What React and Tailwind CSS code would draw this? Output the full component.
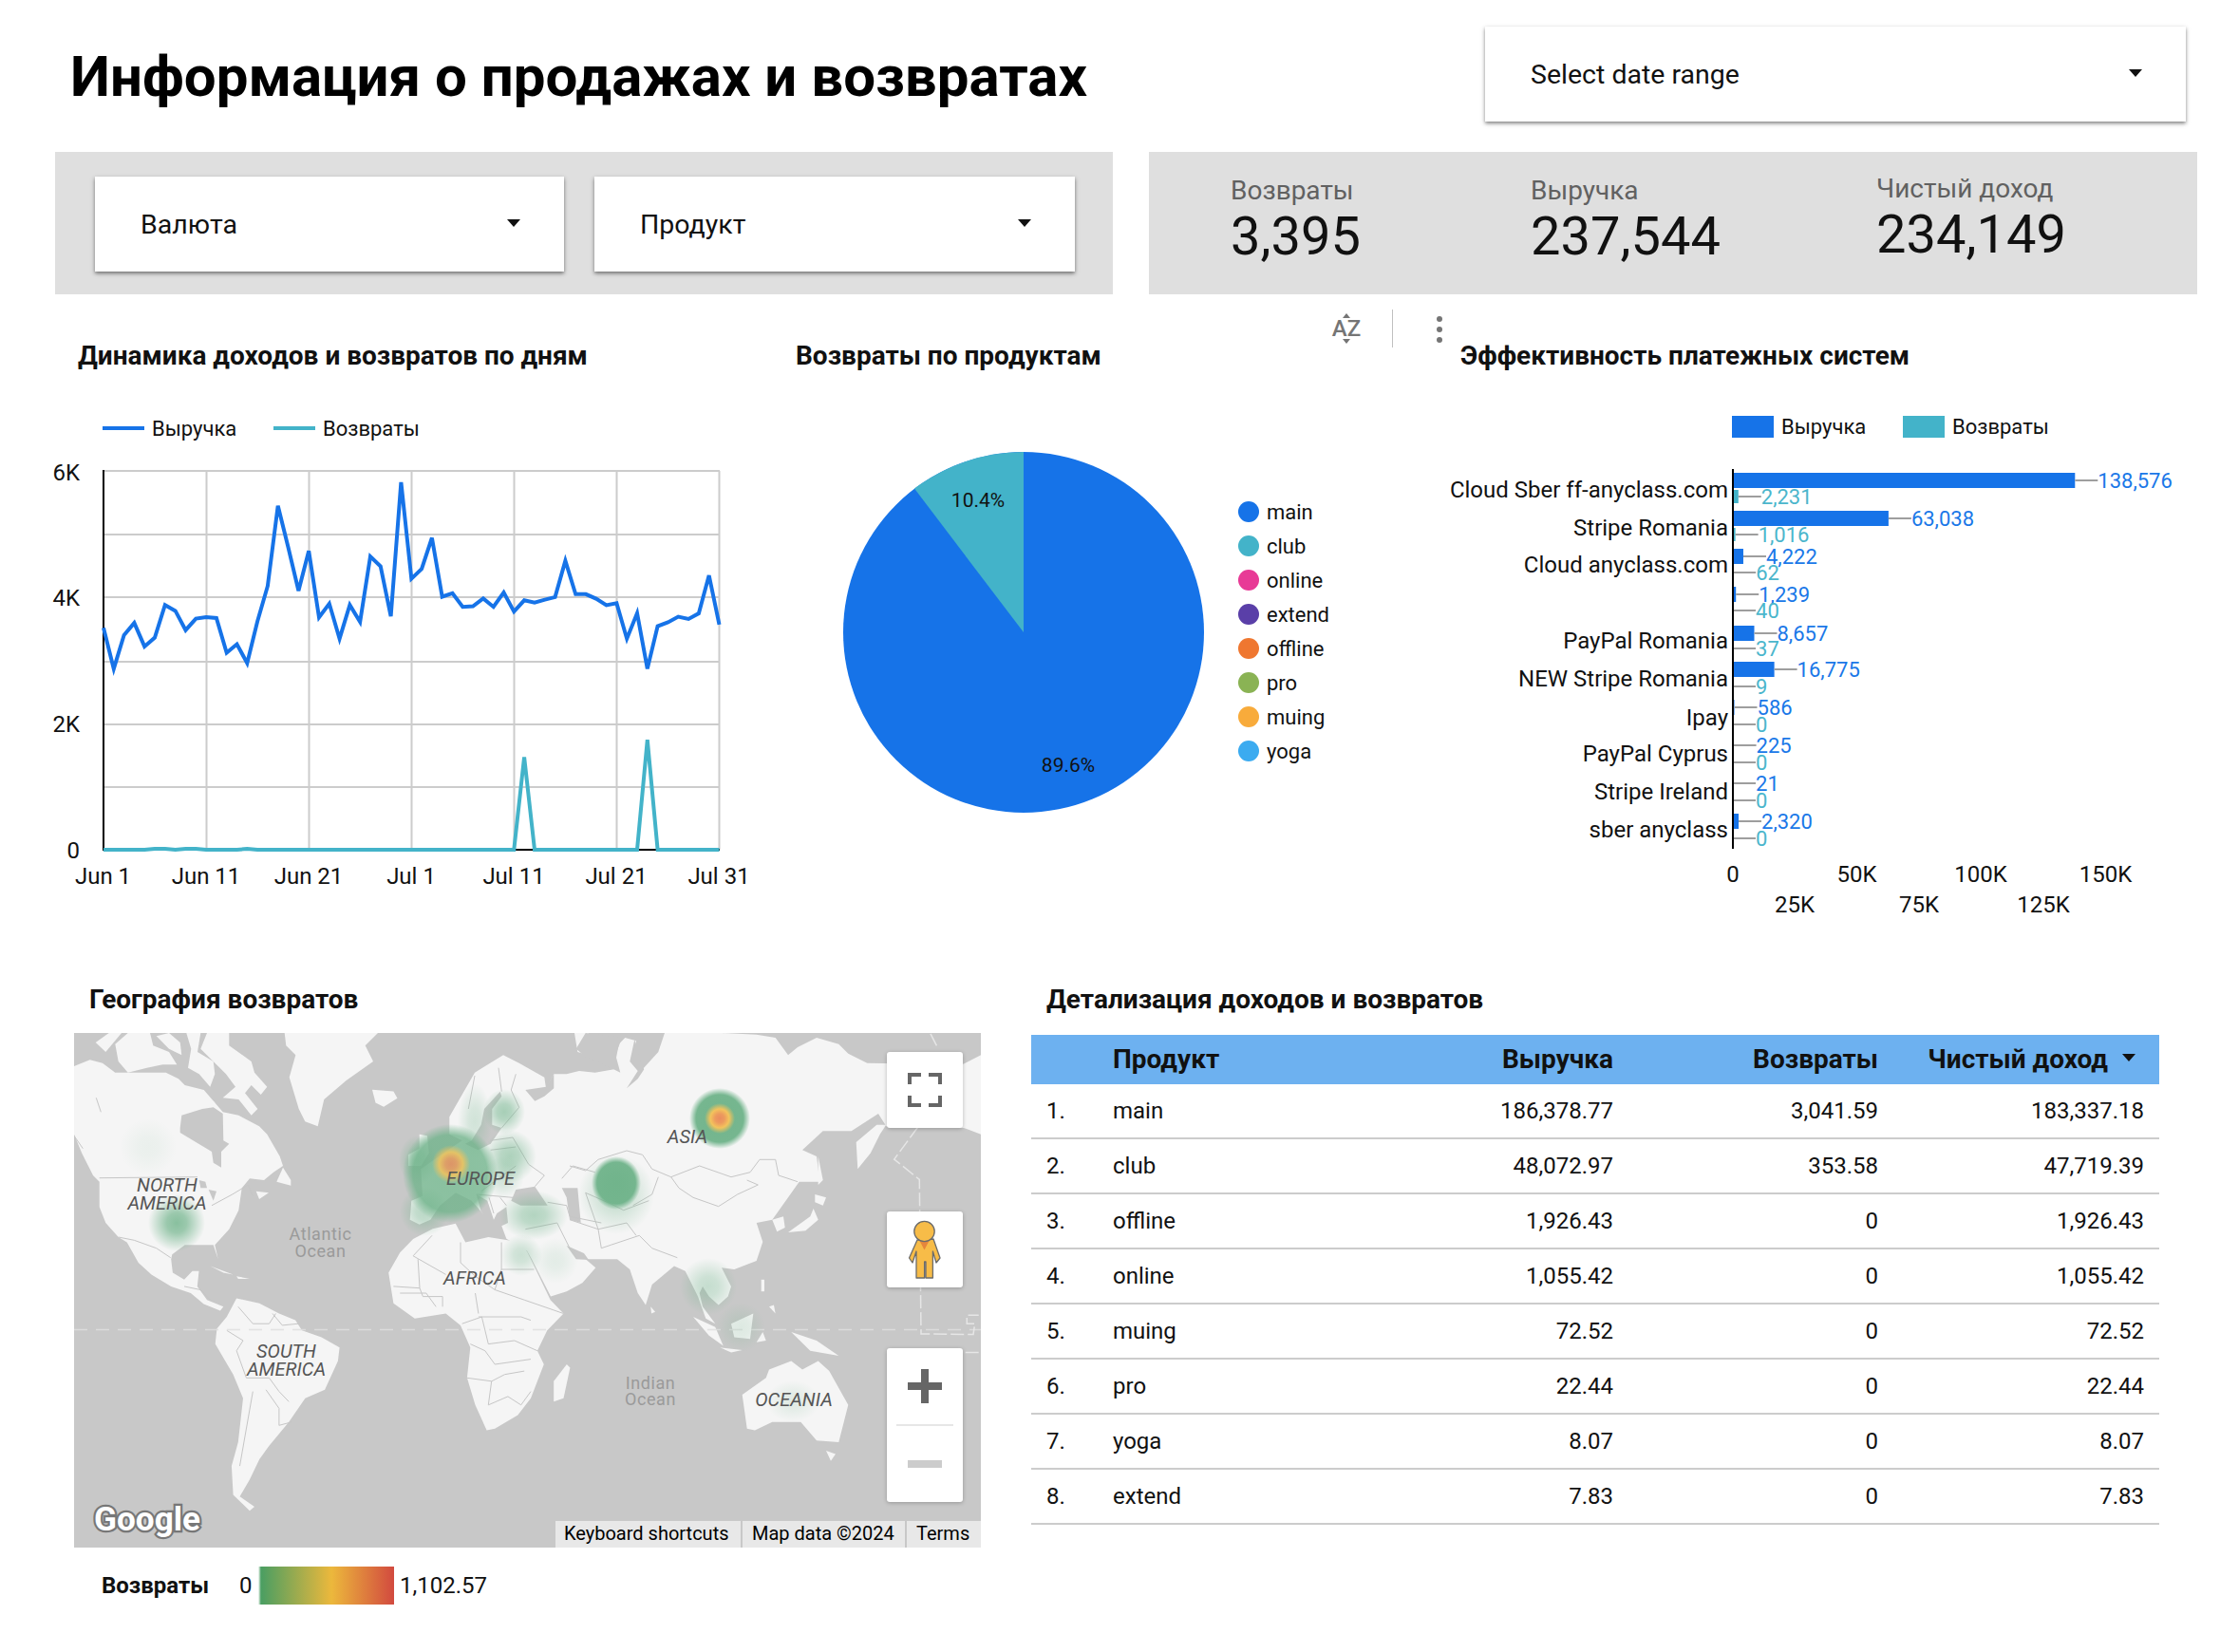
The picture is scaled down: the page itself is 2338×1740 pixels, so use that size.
import React from "react";

const BLUE = "#1673e8";
const TEAL = "#43b3c9";

/* ---------- line chart ---------- */
const rev = [700,825,722,685,757,730,630,648,707,672,667,670,776,750,808,680,572,327,455,587,465,668,626,733,630,682,482,512,665,255,550,520,425,605,594,636,634,610,636,592,650,616,623,614,606,495,597,597,611,631,625,733,655,825,695,683,666,673,656,540,690];
const ret = rev.map((_, i) => (i === 41 ? 1095 : i === 53 ? 1042 : i === 5 || i === 6 || i === 8 || i === 9 || i === 14 ? 1375 : 1378));
const lx = (i) => 109 + (648.5 / 60) * i;
const ly = (z) => 420 + z * 0.3447;
const linePts = (a) => a.map((z, i) => `${lx(i).toFixed(1)},${ly(z).toFixed(1)}`).join(" ");

function LineChart() {
  const hs = [496, 563, 629, 697, 763, 829, 895];
  const vs = [109, 217.5, 325.5, 433.5, 541.5, 649.5, 757.5];
  const xl = ["Jun 1", "Jun 11", "Jun 21", "Jul 1", "Jul 11", "Jul 21", "Jul 31"];
  return (
    <svg width="750" height="480" viewBox="50 470 750 480" className="block">
      {hs.map((y) => <line key={y} x1="109" x2="758" y1={y} y2={y} stroke="#cccccc" strokeWidth="2" />)}
      {vs.map((x) => <line key={x} x1={x} x2={x} y1="496" y2="895" stroke="#cccccc" strokeWidth="2" />)}
      <line x1="109" x2="758" y1="895" y2="895" stroke="#000" strokeWidth="2" />
      <line x1="109" x2="109" y1="495" y2="896" stroke="#000" strokeWidth="2" />
      <polyline points={linePts(rev)} fill="none" stroke={BLUE} strokeWidth="4" strokeLinejoin="miter" />
      <polyline points={linePts(ret)} fill="none" stroke={TEAL} strokeWidth="4" />
      {[["6K", 498], ["4K", 630], ["2K", 763], ["0", 896]].map(([t, y]) => (
        <text key={t} x="84" y={y} textAnchor="end" dominantBaseline="central" fontSize="24" fill="#111">{t}</text>
      ))}
      {xl.map((t, i) => (
        <text key={t} x={vs[i] - 0.5} y="923" textAnchor="middle" dominantBaseline="central" fontSize="24" fill="#111">{t}</text>
      ))}
    </svg>
  );
}

/* ---------- pie ---------- */
const pieLegend = [
  ["main", "bg-[#1673e8]"], ["club", "bg-[#43b3c9]"], ["online", "bg-[#e83a96]"], ["extend", "bg-[#5a3fa8]"],
  ["offline", "bg-[#ef7730]"], ["pro", "bg-[#8ab354]"], ["muing", "bg-[#f8ab3b]"], ["yoga", "bg-[#3babf0]"],
];

function Pie() {
  return (
    <div className="flex pl-[88px] mt-[81px]">
      <svg width="380" height="380" viewBox="0 0 380 380" className="block shrink-0">
        <circle cx="190" cy="190" r="190" fill={BLUE} />
        <path d="M190 190 L190 0 A190 190 0 0 0 75 38.6 Z" fill={TEAL} />
        <text x="142" y="51" textAnchor="middle" dominantBaseline="central" fontSize="21" fill="#111">10.4%</text>
        <text x="237" y="330" textAnchor="middle" dominantBaseline="central" fontSize="21" fill="#111">89.6%</text>
      </svg>
      <div className="ml-[36px] mt-[45px] flex flex-col">
        {pieLegend.map(([t, c]) => (
          <div key={t} className="h-[36px] flex items-center gap-[8px] text-[22px] text-[#111]">
            <span className={`w-[22px] h-[22px] rounded-full ${c}`} />
            <span>{t}</span>
          </div>
        ))}
      </div>
    </div>
  );
}

/* ---------- bars ---------- */
const bars = [
  { n: "Cloud Sber ff-anyclass.com", ly: 516, a: 138576, at: "138,576", ay: 506, b: 2231, bt: "2,231", by: 523 },
  { n: "Stripe Romania", ly: 556, a: 63038, at: "63,038", ay: 546, b: 1016, bt: "1,016", by: 563 },
  { n: "Cloud anyclass.com", ly: 595, a: 4222, at: "4,222", ay: 586, b: 62, bt: "62", by: 603 },
  { n: "", ly: 635, a: 1239, at: "1,239", ay: 626, b: 40, bt: "40", by: 643 },
  { n: "PayPal Romania", ly: 675, a: 8657, at: "8,657", ay: 667, b: 37, bt: "37", by: 683 },
  { n: "NEW Stripe Romania", ly: 715, a: 16775, at: "16,775", ay: 705, b: 9, bt: "9", by: 723 },
  { n: "Ipay", ly: 756, a: 586, at: "586", ay: 745, b: 0, bt: "0", by: 763 },
  { n: "PayPal Cyprus", ly: 794, a: 225, at: "225", ay: 785, b: 0, bt: "0", by: 803 },
  { n: "Stripe Ireland", ly: 834, a: 21, at: "21", ay: 825, b: 0, bt: "0", by: 843 },
  { n: "sber anyclass", ly: 874, a: 2320, at: "2,320", ay: 865, b: 0, bt: "0", by: 883 },
];
const bw = (v) => v * 0.0026;

function BarChart() {
  const ticks = [["0", 1825, 921], ["25K", 1890, 953], ["50K", 1955.5, 921], ["75K", 2021, 953], ["100K", 2086, 921], ["125K", 2152, 953], ["150K", 2217.5, 921]];
  return (
    <svg width="858" height="495" viewBox="1480 480 858 495" className="block">
      {bars.map((r, i) => {
        const ax = 1825 + bw(r.a), bx = 1825 + bw(r.b);
        return (
          <g key={i}>
            <rect x="1825" y={r.ay - 8} width={Math.max(bw(r.a), 0)} height="16" fill={BLUE} />
            <rect x="1825" y={r.by - 7} width={bw(r.b)} height="14" fill={TEAL} />
            <line x1={ax} x2={ax + 24} y1={r.ay} y2={r.ay} stroke="#9e9e9e" strokeWidth="2" />
            <line x1={bx} x2={bx + 24} y1={r.by} y2={r.by} stroke="#9e9e9e" strokeWidth="2" />
            <text x={ax + 24} y={r.ay} dominantBaseline="central" fontSize="22" fill="#1a78e8">{r.at}</text>
            <text x={bx + 24} y={r.by} dominantBaseline="central" fontSize="22" fill="#4bb6cc">{r.bt}</text>
            <text x="1820" y={r.ly} textAnchor="end" dominantBaseline="central" fontSize="24" fill="#111">{r.n}</text>
          </g>
        );
      })}
      <line x1="1825" x2="1825" y1="494" y2="894" stroke="#000" strokeWidth="2" />
      {ticks.map(([t, x, y]) => (
        <text key={t} x={x} y={y} textAnchor="middle" dominantBaseline="central" fontSize="24" fill="#111">{t}</text>
      ))}
    </svg>
  );
}

/* ---------- map ---------- */
const parse = (s, ox, oy, sx, sy) => s.trim().split(/\s+/).map((p) => { const [x, y] = p.split(",").map(Number); return `${(ox + x * sx).toFixed(1)},${(oy + y * sy).toFixed(1)}`; }).join(" ");
const A = (s) => parse(s, 78, 1088, 1 / 3, 1 / 3);
const B = (s) => parse(s, 400, 1088, 1 / 3, 1 / 3);
const C = (s) => parse(s, 600, 1088, 1 / 3, 1 / 3);
const Z6 = (s) => parse(s, 70, 1080, 0.3444, 0.357);
const Z7 = (s) => parse(s, 540, 1080, 1 / 3, 0.357);

const LAND = "#f5f5f5", SEA = "#c8c8c8", BORDER = "#c6c6c6";

const landPolys = [
  // North America
  A("0,105 50,85 90,95 130,125 290,125 330,145 350,165 410,180 470,250 520,260 585,295 610,320 650,390 660,420 630,440 600,465 555,460 530,490 520,560 490,620 445,670 455,715 440,670 390,670 350,670 310,700") + " " +
    Z6("320,690 325,730 360,750 385,725 405,725 400,770 430,810 480,830 470,842 420,822 380,790 320,770 260,735 220,700 185,640") + " " +
    A("140,645 100,600 80,550 80,470 60,450 25,380 0,320"),
  A("68,30 110,0 150,0 100,60"),
  A("130,35 170,0 240,0 250,40 300,60 325,100 280,100 230,110 170,125 140,90"),
  A("260,10 300,0 335,30 340,70 300,50"),
  A("355,0 400,0 390,60 440,90 445,130 430,170 395,130 360,110 370,50"),
  A("420,0 490,0 490,40 560,90 570,125 610,170 590,195 560,165 540,190 580,240 560,260 520,210 470,205 510,170 480,130 440,90 400,50"),
  A("405,190 445,220 440,235 410,230"),
  A("640,470 660,425 685,465 685,482"),
  A("575,500 615,505 585,525"),
  // Greenland + Iceland
  A("665,0 960,0 920,40 945,90 860,150 790,210 770,295 730,280 710,240 680,140 700,70 670,40"),
  Z6("935,190 1000,195 1012,215 970,240 945,228"),
  B("125,320 150,325 155,380 130,420 90,420 90,385 125,365"),
  // South America
  Z6("520,805 590,820 650,850 700,870 720,900 780,920 835,950 830,990 790,1075 730,1100 680,1170 620,1240 590,1280 560,1340 530,1390 575,1420 560,1432 510,1385 505,1300 525,1230 540,1100 510,1030 455,940 460,895 490,860"),
  // Caribbean
  Z6("440,710 510,735 480,730"), Z6("520,740 560,748 525,748"),
  // Africa
  Z6("1060,630 1120,600 1190,585 1220,640 1290,625 1390,640 1410,670 1450,750 1480,810 1520,850 1470,900 1440,960 1460,1000 1420,1100 1380,1150 1310,1190 1285,1195 1250,1120 1225,1040 1235,950 1205,885 1160,850 1065,865 1000,820 985,730 1020,670"),
  Z6("1530,1000 1540,1010 1520,1100 1490,1110 1490,1050"),
  // Eurasia
  B("95,590 100,530 135,515 130,430 200,380 260,340 220,320 220,265 300,125 390,70 440,95 520,140 525,175 550,130 590,130 630,120 680,125 740,115 755,35 775,15 810,25 800,75 830,115 880,60 900,0") + " " +
    C("480,0 590,5 650,15 690,70 720,45 780,15 850,35 880,65 940,95 1240,100 1299,70 1299,320 1245,300 1000,295 975,255 890,310 800,310 735,370 780,390 790,470 725,470 690,520 640,590 590,600 610,660 590,720") + " " +
    Z7("700,720 660,715 690,770 680,800 650,825 620,800 600,770 590,790 600,830 640,880 610,865 585,800 545,725 510,710 440,765 420,825 395,790 370,720 330,690 270,690 230,690 262,715 220,760 170,785 120,800 60,690 45,665") + " " +
    B("400,650 385,610 405,600 400,550 370,570 360,590 340,530 305,510 320,565 330,575 290,530 240,505 190,545 160,590 125,605"),
  B("615,0 660,0 640,40 660,70 625,60"),
  // Japan / Kamchatka / islands
  C("1000,290 970,290 905,345 910,430 950,380 980,320"),
  C("785,390 800,465 785,480"),
  C("775,510 810,520 800,545 775,535"), C("770,555 785,590 745,625 690,630 760,580"), C("640,590 675,580 680,615 655,628"),
  // Indonesia etc.
  Z7("570,860 640,890 665,945 620,915"), Z7("690,880 760,850 750,925 700,920"), Z7("655,950 725,958 690,965"),
  Z7("770,935 790,905 800,930"), Z7("880,905 960,930 1030,975 940,960"), Z7("785,750 795,750 795,785 785,785"), Z7("810,830 825,825 830,850"),
  Z7("436,830 450,845 438,850"),
  // Australia
  Z7("725,1090 800,1040 810,1015 880,990 915,1015 965,990 1000,1020 1060,1120 1030,1230 960,1225 910,1170 820,1170 765,1195 740,1190"),
  Z7("990,1255 1020,1265 1005,1285"),
];

const seaPolys = [
  A("335,300 340,260 405,240 440,235 470,255 472,340 490,350 465,375 465,425 440,410 435,375 385,345 335,315"),
  A("395,465 415,470 420,490 400,490"), A("425,495 450,500 440,530"),
  B("320,290 330,240 380,185 385,200 355,240 355,290 385,300 350,350 310,370 270,350 290,340"),
  B("460,180 490,215 520,200 550,175 550,130 525,170"),
  B("415,530 430,495 490,485 530,545 445,545"),
  B("575,490 625,490 635,600 600,590 590,520"),
  C("205,20 190,90 215,120 180,175 215,145 235,115 225,90"),
  C("130,110 160,125 145,70 165,15 50,0 20,50 50,75"),
  Z7("170,650 200,690 240,692 225,672"),
];

const borders = [
  A("80,458 390,455"), A("435,545 500,510 550,480 565,515"), A("140,645 190,655 260,680 305,710"), A("70,205 85,250"), A("0,325 28,365"),
  Z6("1118,620 1060,680 1160,735"), Z6("1205,640 1205,700 1250,740 1310,780 1330,720 1430,720"), Z6("1330,640 1330,720"),
  Z6("1310,780 1400,810 1520,850"), Z6("1000,770 1080,775 1075,690"), Z6("1080,775 1090,800 1150,800 1150,830"), Z6("1250,790 1260,850"),
  Z6("1260,860 1390,860 1420,870"), Z6("1210,880 1270,860 1290,940 1370,930 1440,960"), Z6("1235,940 1280,960 1310,1000 1420,985"),
  Z6("1225,1040 1300,1050 1340,1030 1400,1020"), Z6("1300,1050 1290,1120 1350,1095 1390,1120 1420,1080"), Z6("1020,790 1100,790 1130,830"),
  Z6("490,900 540,930 520,960 550,1040"), Z6("525,830 570,880 620,880 640,850"), Z6("630,850 660,885 710,880"),
  Z6("550,1040 620,1040 650,1080 680,1110"), Z6("570,1080 530,1300"), Z6("610,1075 650,1130 650,1180 690,1170"),
  Z6("360,770 410,780 440,810"),
  C("0,420 50,435 90,400 180,372 230,385 260,430 320,455 410,420 510,455 570,440 600,400 650,400 660,450 690,460 720,470"),
  C("320,455 345,490 390,520 470,548 530,510 595,480 560,465"), C("0,590 90,620 180,600"), C("90,620 100,680 130,670 220,640 260,680 340,710"),
  C("180,600 210,640"), C("50,505 130,540 170,560 250,530"), C("90,620 50,505"), C("280,455 260,510 200,545"),
  B("300,135 280,240"), B("375,110 385,185"), B("430,130 415,180 440,235 385,300"), B("350,340 420,330 470,415 520,450 490,485"),
  B("350,370 430,360"), B("430,420 320,500"), B("305,510 420,520"), B("345,520 360,570"), B("380,520 400,545"),
  B("575,460 610,420 680,440"), B("530,535 590,545 600,580 700,600"), B("460,620 560,600"), B("560,600 600,680"),
];

const blobs = [
  ["g", 156, 1208, 30, 30, 0.09],
  ["g", 186, 1288, 30, 30, 0.9],
  ["g", 500, 1181, 18, 40, 0.3],
  ["g", 531, 1171, 22, 24, 0.65],
  ["g", 537, 1218, 28, 28, 0.6],
  ["g", 440, 1222, 20, 26, 0.55],
  ["g", 447, 1276, 26, 26, 0.5],
  ["p", 474, 1236, 50, 52, 0.82],
  ["g", 530, 1240, 22, 22, 0.3],
  ["g", 562, 1280, 36, 26, 0.55],
  ["g", 549, 1322, 22, 22, 0.35],
  ["g", 585, 1328, 24, 24, 0.15],
  ["g", 649, 1258, 40, 42, 0.4],
  ["p", 649, 1246, 26, 28, 1],
  ["g", 746, 1355, 30, 30, 0.4],
  ["g", 780, 1398, 26, 26, 0.2],
  ["g", 835, 1476, 28, 22, 0.18],
];

function MapDrawing() {
  return (
    <svg width="955" height="542" viewBox="78 1088 955 542" className="block">
      <defs>
        <radialGradient id="g"><stop offset="0" stopColor="#6fb38a" stopOpacity="0.9" /><stop offset="0.35" stopColor="#6fb38a" stopOpacity="0.75" /><stop offset="1" stopColor="#6fb38a" stopOpacity="0" /></radialGradient>
        <radialGradient id="p"><stop offset="0" stopColor="#6fb38a" stopOpacity="0.98" /><stop offset="0.78" stopColor="#6fb38a" stopOpacity="0.95" /><stop offset="1" stopColor="#6fb38a" stopOpacity="0" /></radialGradient>
        <radialGradient id="h"><stop offset="0" stopColor="#ea8d5e" /><stop offset="0.3" stopColor="#ec9a5e" /><stop offset="0.62" stopColor="#f3c35c" /><stop offset="1" stopColor="#f3c35c" stopOpacity="0" /></radialGradient>
      </defs>
      <rect x="78" y="1088" width="955" height="542" fill={SEA} />
      {landPolys.map((p, i) => <polygon key={i} points={p} fill={LAND} />)}
      {seaPolys.map((p, i) => <polygon key={i} points={p} fill={SEA} />)}
      {borders.map((p, i) => <polyline key={i} points={p} fill="none" stroke={BORDER} strokeWidth="1" />)}
      <line x1="78" x2="1033" y1="1400.5" y2="1400.5" stroke="#e0e0e0" strokeWidth="1.5" strokeDasharray="14 9" opacity="0.85" />
      <polyline points={Z7("1320,25 1345,70")} fill="none" stroke="#e6e6e6" strokeWidth="1.5" strokeDasharray="14 6" />
      <polyline points={Z7("1280,300 1205,395 1285,455 1290,910 1455,912 1460,880 1435,880 1435,855 1472,855")} fill="none" stroke="#e6e6e6" strokeWidth="1.5" strokeDasharray="14 4" />
      <polyline points={Z7("1430,965 1482,965")} fill="none" stroke="#e6e6e6" strokeWidth="1.5" strokeDasharray="14 6" />

      {blobs.map(([k, x, y, rx, ry, o], i) => <ellipse key={i} cx={x} cy={y} rx={rx} ry={ry} fill={`url(#${k})`} opacity={o} />)}
      <circle cx="758" cy="1178" r="32" fill="url(#p)" />
      <circle cx="475" cy="1226" r="20" fill="url(#h)" opacity="0.85" />
      <circle cx="758" cy="1178" r="16" fill="url(#h)" />

      <g fontStyle="italic" fontSize="20" fill="#555555" textAnchor="middle">
        <text x="176" y="1255">NORTH</text>
        <text x="176" y="1274">AMERICA</text>
        <text x="301.5" y="1430">SOUTH</text>
        <text x="301.5" y="1449">AMERICA</text>
        <text x="500" y="1353">AFRICA</text>
        <text x="506" y="1248">EUROPE</text>
        <text x="724" y="1204">ASIA</text>
        <text x="836" y="1481">OCEANIA</text>
      </g>
      <g fontSize="18" fill="#9a9a9a" textAnchor="middle" letterSpacing="0.6">
        <text x="337.5" y="1306">Atlantic</text>
        <text x="337.5" y="1324">Ocean</text>
        <text x="685" y="1463">Indian</text>
        <text x="685" y="1480">Ocean</text>
      </g>
      <text x="99" y="1612" fontSize="35" fontWeight="700" fill="#ffffff" stroke="#777777" strokeWidth="4.5" paintOrder="stroke" textLength="112" lengthAdjust="spacingAndGlyphs">Google</text>
    </svg>
  );
}

function Arrow({ className = "" }) {
  return <span className={`w-0 h-0 border-x-[7px] border-t-[8px] border-x-transparent border-t-[#111] ${className}`} />;
}

function Select({ label, className }) {
  return (
    <div className={`bg-white h-[100px] flex items-center justify-between pt-[2px] pl-[48px] pr-[46px] text-[28.5px] text-[#111] shadow-[0_2px_4px_rgba(0,0,0,0.5)] ${className}`}>
      <span>{label}</span>
      <Arrow className="-mt-[4px]" />
    </div>
  );
}

function Score({ label, value, className }) {
  return (
    <div className={`flex flex-col ${className}`}>
      <span className="text-[28px] leading-[34px] text-[#616161]">{label}</span>
      <span className="text-[56px] leading-[62px] text-[#111]">{value}</span>
    </div>
  );
}

const rows = [
  ["main", "186,378.77", "3,041.59", "183,337.18"],
  ["club", "48,072.97", "353.58", "47,719.39"],
  ["offline", "1,926.43", "0", "1,926.43"],
  ["online", "1,055.42", "0", "1,055.42"],
  ["muing", "72.52", "0", "72.52"],
  ["pro", "22.44", "0", "22.44"],
  ["yoga", "8.07", "0", "8.07"],
  ["extend", "7.83", "0", "7.83"],
];

const colClass = "grid grid-cols-[86px_302px_225px_279px_280px_16px] items-center";

function ChartTitle({ children, className = "" }) {
  return <h2 className={`h-[40px] mt-[45px] flex items-center text-[28px] font-bold text-[#111] ${className}`}>{children}</h2>;
}

export default function App() {
  return (
    <div className="relative w-[2338px] h-[1740px] overflow-hidden bg-white [font-family:Roboto,sans-serif]">
      {/* header */}
      <div className="flex h-[160px]">
        <h1 className="ml-[74px] mt-[43px] h-[76px] leading-[76px] text-[60px] font-bold text-black">Информация о продажах и возвратах</h1>
        <Select label="Select date range" className="ml-auto mr-[36px] mt-[28px] w-[738px]" />
      </div>

      {/* filters and scorecards */}
      <div className="flex h-[150px]">
        <div className="ml-[58px] w-[1114px] bg-[#dfdfdf] pl-[42px] pt-[26px] flex gap-[32px]">
          <Select label="Валюта" className="w-[494px]" />
          <Select label="Продукт" className="w-[506px]" />
        </div>
        <div className="ml-[38px] w-[1104px] bg-[#dfdfdf] pl-[86px] pt-[24px] flex">
          <Score label="Возвраты" value="3,395" className="w-[316px]" />
          <Score label="Выручка" value="237,544" className="w-[364px]" />
          <Score label="Чистый доход" value="234,149" className="-mt-[2px]" />
        </div>
      </div>

      {/* toolbar floating over charts */}
      <div className="absolute left-[1400px] top-[326px] h-[40px] flex items-center text-[#757575]">
        <div className="w-[36px] flex flex-col items-center">
          <span className="w-0 h-0 border-x-[4px] border-b-[5px] border-x-transparent border-b-[#757575]" />
          <span className="text-[24px] leading-[22px] font-medium">AZ</span>
          <span className="w-0 h-0 border-x-[4px] border-t-[5px] border-x-transparent border-t-[#757575]" />
        </div>
        <div className="ml-[30px] w-px h-[40px] bg-[#c0c0c0]" />
        <div className="ml-[46px] mt-[2px] flex flex-col gap-[5px]">
          <span className="w-[6px] h-[6px] rounded-full bg-[#757575]" />
          <span className="w-[6px] h-[6px] rounded-full bg-[#757575]" />
          <span className="w-[6px] h-[6px] rounded-full bg-[#757575]" />
        </div>
      </div>

      {/* charts */}
      <div className="flex h-[723px] pl-[50px]">
        <div className="w-[750px]">
          <ChartTitle className="pl-[32px]">Динамика доходов и возвратов по дням</ChartTitle>
          <div className="mt-[44px] h-[24px] pl-[58px] flex items-center text-[22px] text-[#111]">
            <div className="w-[180px] flex items-center gap-[8px]"><span className="w-[44px] h-[4px] bg-[#1673e8]" /><span>Выручка</span></div>
            <div className="flex items-center gap-[8px]"><span className="w-[44px] h-[4px] bg-[#43b3c9]" /><span>Возвраты</span></div>
          </div>
          <div className="mt-[7px]"><LineChart /></div>
        </div>
        <div className="w-[680px]">
          <ChartTitle className="pl-[38px]">Возвраты по продуктам</ChartTitle>
          <Pie />
        </div>
        <div className="w-[858px]">
          <ChartTitle className="pl-[58px]">Эффективность платежных систем</ChartTitle>
          <div className="mt-[43px] h-[23px] pl-[344px] flex items-center text-[22px] text-[#111]">
            <div className="w-[180px] flex items-center gap-[8px]"><span className="w-[44px] h-[23px] bg-[#1673e8]" /><span>Выручка</span></div>
            <div className="flex items-center gap-[8px]"><span className="w-[44px] h-[23px] bg-[#43b3c9]" /><span>Возвраты</span></div>
          </div>
          <div className="mt-[19px]"><BarChart /></div>
        </div>
      </div>

      {/* bottom */}
      <div className="flex">
        <div className="ml-[78px] w-[955px]">
          <h2 className="h-[40px] pl-[16px] flex items-center text-[28px] font-bold text-[#111]">География возвратов</h2>
          <div className="relative mt-[15px] w-[955px] h-[542px]">
            <MapDrawing />
            {/* fullscreen */}
            <div className="absolute left-[856px] top-[20px] w-[80px] h-[80px] rounded-[3px] bg-white shadow-[0_1px_4px_rgba(0,0,0,0.25)] flex items-center justify-center">
              <svg width="36" height="36" viewBox="0 0 36 36"><path d="M2 12V2h12M22 2h12v10M34 24v10H22M14 34H2V24" fill="none" stroke="#666666" strokeWidth="4" /></svg>
            </div>
            {/* pegman */}
            <div className="absolute left-[856px] top-[188px] w-[80px] h-[80px] rounded-[3px] bg-white shadow-[0_1px_4px_rgba(0,0,0,0.25)] flex items-center justify-center">
              <svg width="40" height="68" viewBox="1 3 40 68">
                <path d="M13 27 L4.5 46 L8 51 L12 39 V67 H20.6 V50 H22 V67 H29.4 V39 L33 51 L37 46 L30 26 Z" fill="#f7bc48" stroke="#6b6b6b" strokeWidth="1.3" strokeLinejoin="round" />
                <path d="M15 27 H26 L20.5 37.5 Z" fill="#e5863c" />
                <circle cx="20.5" cy="18" r="10.7" fill="#f7bc48" stroke="#6b6b6b" strokeWidth="1.3" />
              </svg>
            </div>
            {/* zoom */}
            <div className="absolute left-[856px] top-[332px] w-[80px] h-[162px] rounded-[3px] bg-white shadow-[0_1px_4px_rgba(0,0,0,0.25)] flex flex-col items-center">
              <div className="h-[80px] w-full flex items-center justify-center">
                <svg width="36" height="36" viewBox="0 0 36 36"><path d="M14 0h8v14h14v8H22v14h-8V22H0v-8h14z" fill="#666666" /></svg>
              </div>
              <div className="w-[60px] h-[2px] bg-[#e6e6e6]" />
              <div className="h-[80px] w-full flex items-center justify-center">
                <span className="w-[36px] h-[8px] bg-[#cccccc]" />
              </div>
            </div>
            {/* attribution */}
            <div className="absolute right-0 bottom-0 h-[28px] flex gap-[2px] text-[20px] leading-[26px] text-black">
              <span className="bg-[#e8e8e8] w-[195px] pl-[9px]">Keyboard shortcuts</span>
              <span className="bg-[#e8e8e8] w-[171px] pl-[10px]">Map data ©2024</span>
              <span className="bg-[#e8e8e8] w-[78px] pl-[10px]">Terms</span>
            </div>
          </div>
          <div className="mt-[20px] h-[40px] pl-[29px] flex items-center text-[24px] text-[#111]">
            <span className="w-[145px] text-[24px] font-bold">Возвраты</span>
            <span className="w-[20px]">0</span>
            <span className="w-[143px] h-[40px] bg-[linear-gradient(90deg,#ffffff_0%,#4a9e62_2%,#ecb83c_54%,#d24a3f_100%)]" />
            <span className="ml-[6px]">1,102.57</span>
          </div>
        </div>
        <div className="ml-[53px] w-[1188px]">
          <h2 className="h-[40px] pl-[16px] flex items-center text-[28px] font-bold text-[#111]">Детализация доходов и возвратов</h2>
          <div className={`mt-[17px] h-[52px] bg-[#6db1f0] text-[28px] font-bold text-[#111] ${colClass}`}>
            <span />
            <span>Продукт</span>
            <span className="text-right">Выручка</span>
            <span className="text-right">Возвраты</span>
            <span className="flex items-center justify-end gap-[15px] pr-[9px]">Чистый доход<Arrow className="-mt-[4px] border-x-[6px]" /></span>
            <span />
          </div>
          {rows.map((r, i) => (
            <div key={r[0]} className={`h-[58px] border-b-2 border-[#cccccc] text-[24px] text-[#111] ${colClass}`}>
              <span className="pl-[16px]">{i + 1}.</span>
              <span>{r[0]}</span>
              <span className="text-right">{r[1]}</span>
              <span className="text-right">{r[2]}</span>
              <span className="text-right">{r[3]}</span>
              <span />
            </div>
          ))}
        </div>
      </div>
    </div>
  );
}
